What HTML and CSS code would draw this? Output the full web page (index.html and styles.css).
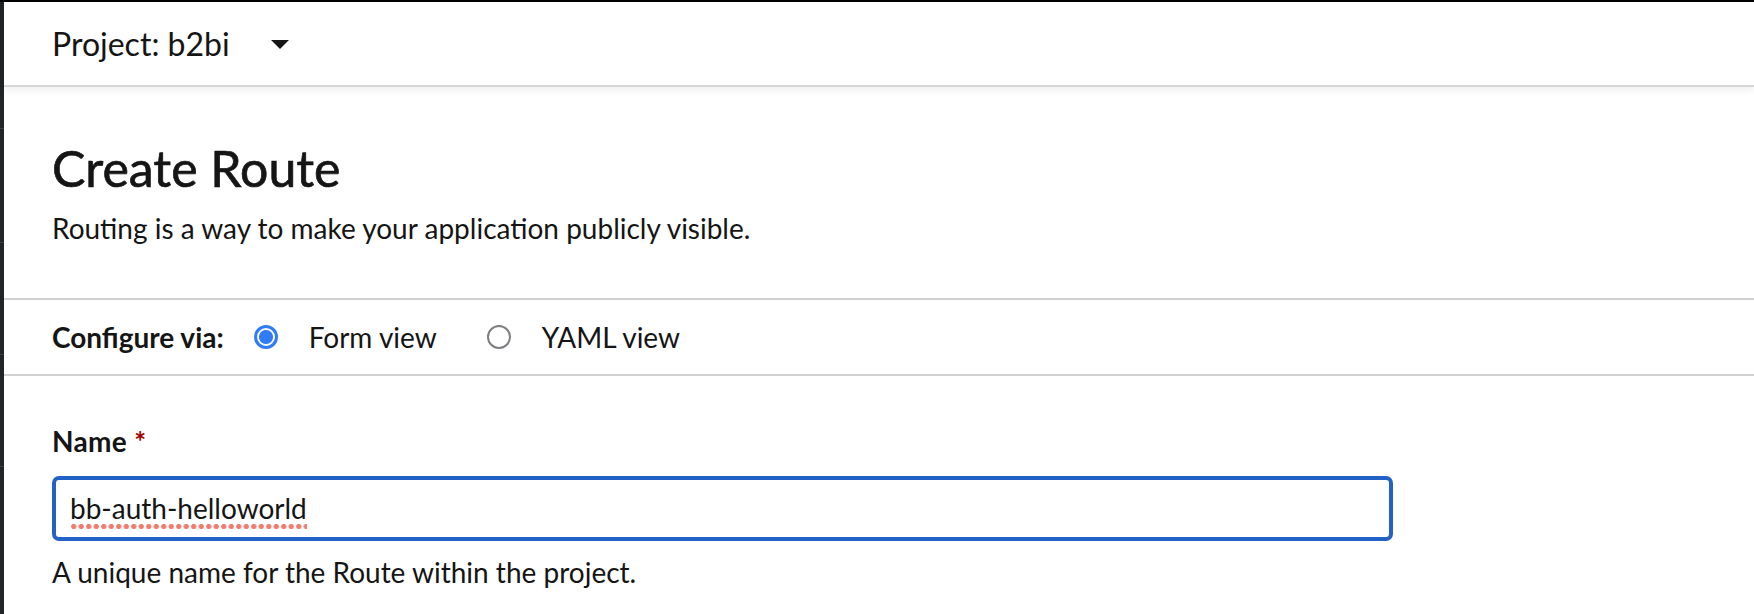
FILE: index.html
```html
<!DOCTYPE html>
<html>
<head>
<meta charset="utf-8">
<link rel="stylesheet" href="styles.css">
</head>
<body>
<div class="app">
  <aside class="rail">
    <span class="rail-mark m1"></span>
    <span class="rail-mark m2"></span>
    <span class="rail-mark m3"></span>
    <span class="rail-mark m4"></span>
  </aside>
  <div class="main">
    <header class="topbar">
      <button class="project">
        <span class="project-label">Project: b2bi</span>
        <span class="caret"></span>
      </button>
    </header>
    <section class="title-block">
      <h1 class="title">Create Route</h1>
      <p class="desc">Routing is a way to make your application publicly visible.</p>
    </section>
    <div class="configure">
      <span class="configure-label">Configure via:</span>
      <label class="radio"><span class="radio-dot checked"></span><span class="radio-text">Form view</span></label>
      <label class="radio"><span class="radio-dot"></span><span class="radio-text">YAML view</span></label>
    </div>
    <form class="form">
      <div class="field-label">Name <span class="req">*</span></div>
      <div class="input"><span class="misspelled">bb-auth-helloworld</span></div>
      <div class="helper">A unique name for the Route within the project.</div>
    </form>
  </div>
</div>
</body>
</html>
```

FILE: styles.css
```css
html, body {
  margin: 0;
  padding: 0;
  height: 100%;
  background: #fff;
}
body {
  font-family: "Lato", "Noto Sans", sans-serif;
  color: #151515;
  overflow: hidden;
}
.app {
  display: flex;
  height: 614px;
}
.rail {
  width: 4px;
  flex: none;
  background: #212427;
  border-top: 2px solid #000;
  position: relative;
}
.rail-mark {
  position: absolute;
  left: 0;
  width: 4px;
  height: 1px;
  background: #3c3f42;
}
.m1 { top: 126px; }
.m2 { top: 240px; }
.m3 { top: 352px; }
.m4 { top: 464px; }
.main {
  flex: 1;
  display: flex;
  flex-direction: column;
  border-top: 2px solid #000;
  background: #fff;
}
.topbar {
  height: 83px;
  flex: none;
  display: flex;
  align-items: center;
  padding-left: 48px;
  border-bottom: 2px solid #d6d6d6;
  box-shadow: 0 3px 8px rgba(0, 0, 0, 0.07);
  position: relative;
  z-index: 1;
}
.project {
  display: flex;
  align-items: center;
  gap: 41px;
  background: none;
  border: 0;
  padding: 0;
  font: inherit;
  font-size: 32px;
  color: #151515;
}
.caret {
  width: 0;
  height: 0;
  border-left: 9px solid transparent;
  border-right: 9px solid transparent;
  border-top: 9px solid #151515;
  margin-top: 2px;
}
.title-block {
  flex: none;
  padding: 50px 48px 0;
  height: 213px;
  box-sizing: border-box;
  border-bottom: 2px solid #d2d2d2;
}
.title {
  margin: 0;
  font-size: 50px;
  font-weight: 400;
  -webkit-text-stroke: 0.7px #151515;
  line-height: 62px;
  color: #151515;
}
.desc {
  margin: 11px 0 0;
  font-size: 28px;
  line-height: 36px;
}
.configure {
  flex: none;
  height: 76px;
  box-sizing: border-box;
  display: flex;
  align-items: center;
  padding-left: 48px;
  border-bottom: 2px solid #d2d2d2;
  font-size: 28px;
}
.configure-label {
  font-weight: 700;
  margin-right: 30px;
}
.radio {
  display: flex;
  align-items: center;
  margin-right: 50px;
}
.radio-dot {
  width: 20px;
  height: 20px;
  border-radius: 50%;
  border: 2px solid #7d7f82;
  box-sizing: content-box;
  margin-right: 31px;
}
.radio-dot.checked {
  border: 3px solid #2f7cf6;
  width: 18px;
  height: 18px;
  background: radial-gradient(circle, #2f7cf6 0 6.5px, #fff 7.5px);
}
.form {
  padding: 45px 48px 0;
  margin: 0;
}
.field-label {
  font-size: 28px;
  font-weight: 700;
  line-height: 40px;
  letter-spacing: 0.3px;
}
.req {
  color: #a30000;
}
.input {
  margin-top: 15px;
  width: 1341px;
  height: 65px;
  box-sizing: border-box;
  border: 4px solid #2262c6;
  border-radius: 7px;
  padding-left: 14px;
  font-size: 28px;
  line-height: 57px;
}
.misspelled {
  padding-bottom: 5px;
  background-image: radial-gradient(circle, #f07b6e 0 2.3px, transparent 2.9px);
  background-size: 7.5px 7px;
  background-repeat: repeat-x;
  background-position: 0 100%;
}
.helper {
  margin-top: 13px;
  font-size: 28px;
  line-height: 36px;
}
```
